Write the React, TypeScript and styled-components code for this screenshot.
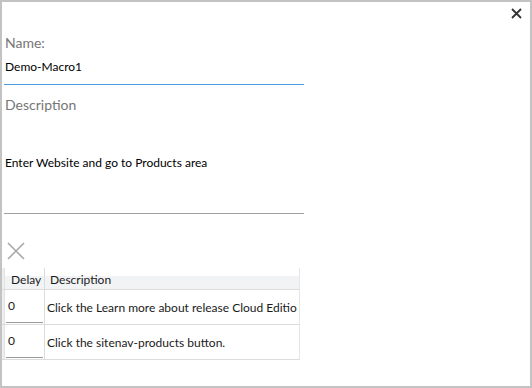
import React from "react";
import styled, { createGlobalStyle } from "styled-components";

const GlobalStyle = createGlobalStyle`
  html, body {
    margin: 0;
    padding: 0;
    background: #ffffff;
  }
  * {
    box-sizing: border-box;
  }
`;

const Frame = styled.div`
  width: 532px;
  height: 388px;
  border: 2px solid #c3c3c3;
  background: #ffffff;
  font-family: "Lato", "Noto Sans", sans-serif;
  display: flex;
  flex-direction: column;
  overflow: hidden;
`;

const TopBar = styled.div`
  height: 31px;
  display: flex;
  justify-content: flex-end;
  padding: 6px 8px 0 0;
`;

const CloseButton = styled.button`
  width: 11px;
  height: 11px;
  padding: 0;
  border: none;
  background: none;
  cursor: pointer;
  display: flex;
`;

const Form = styled.div`
  width: 302px;
  padding-left: 2px;
  display: flex;
  flex-direction: column;
`;

const FieldLabel = styled.div`
  font-size: 14px;
  line-height: 20px;
  color: #767676;
  padding-left: 1px;
`;

const LineInput = styled.div<{ $height: number; $focused?: boolean; $padTop: number }>`
  height: ${(p) => p.$height}px;
  padding: ${(p) => p.$padTop}px 0 0 1px;
  font-size: 12px;
  line-height: 16px;
  color: #000000;
  border-bottom: 1px solid ${(p) => (p.$focused ? "#4b9be3" : "#a0a0a0")};
`;

const Spacer = styled.div<{ $h: number }>`
  height: ${(p) => p.$h}px;
`;

const DeleteButton = styled.button`
  width: 18px;
  height: 18px;
  margin-left: 3px;
  padding: 0;
  border: none;
  background: none;
  display: flex;
`;

const Table = styled.div`
  width: 298px;
  margin-left: -2px;
  margin-top: 8px;
  display: flex;
  flex-direction: column;
  font-size: 12px;
  color: #1a1a1a;
`;

const Row = styled.div<{ $header?: boolean }>`
  display: grid;
  grid-template-columns: 3px 40px 1fr;
  height: ${(p) => (p.$header ? 22 : 35)}px;
  border-bottom: 1px solid #dcdcdc;
  border-right: 1px solid #e6e6e6;
  background: ${(p) =>
    p.$header ? "linear-gradient(#ffffff 0, #ffffff 8px, #f2f3f5 8px)" : "#ffffff"};
`;

const Gutter = styled.div`
  background: #efefef;
  border-right: 1px solid #e2e2e2;
`;

const HeadCell = styled.div<{ $pad: number }>`
  display: flex;
  align-items: center;
  padding-left: ${(p) => p.$pad}px;
  padding-top: 1px;
  border-right: 1px solid #dcdcdc;
  white-space: nowrap;
  &:last-child {
    border-right: none;
  }
`;

const DelayCell = styled.div`
  border-right: 1px solid #dcdcdc;
  padding: 0 1px 1px 1px;
  display: flex;
`;

const DelayInput = styled.div`
  flex: 1;
  padding: 8px 0 0 2px;
  line-height: 16px;
  border-bottom: 1px solid #9a9a9a;
`;

const TextCell = styled.div`
  display: flex;
  align-items: center;
  padding-left: 2px;
  white-space: nowrap;
  overflow: hidden;
`;

const steps = [
  { delay: "0", text: "Click the Learn more about release Cloud Editio" },
  { delay: "0", text: "Click the sitenav-products button." },
];

const Cross = ({ size, color, width }: { size: number; color: string; width: number }) => (
  <svg width={size} height={size} viewBox={`0 0 ${size} ${size}`}>
    <path
      d={`M1 1 L${size - 1} ${size - 1} M${size - 1} 1 L1 ${size - 1}`}
      stroke={color}
      strokeWidth={width}
      fill="none"
    />
  </svg>
);

const App = () => {
  return (
    <>
      <GlobalStyle />
      <Frame>
        <TopBar>
          <CloseButton aria-label="Close">
            <Cross size={11} color="#333333" width={1.8} />
          </CloseButton>
        </TopBar>
        <Form>
          <FieldLabel>Name:</FieldLabel>
          <LineInput $height={32} $padTop={6} $focused>
            Demo-Macro1
          </LineInput>
          <Spacer $h={10} />
          <FieldLabel>Description</FieldLabel>
          <LineInput $height={99} $padTop={40}>
            Enter Website and go to Products area
          </LineInput>
          <Spacer $h={28} />
          <DeleteButton aria-label="Delete">
            <Cross size={18} color="#a9a9a9" width={1.6} />
          </DeleteButton>
          <Table>
            <Row $header>
              <Gutter />
              <HeadCell $pad={6}>Delay</HeadCell>
              <HeadCell $pad={5}>Description</HeadCell>
            </Row>
            {steps.map((s, i) => (
              <Row key={i}>
                <Gutter />
                <DelayCell>
                  <DelayInput>{s.delay}</DelayInput>
                </DelayCell>
                <TextCell>{s.text}</TextCell>
              </Row>
            ))}
          </Table>
        </Form>
      </Frame>
    </>
  );
};

export default App;
